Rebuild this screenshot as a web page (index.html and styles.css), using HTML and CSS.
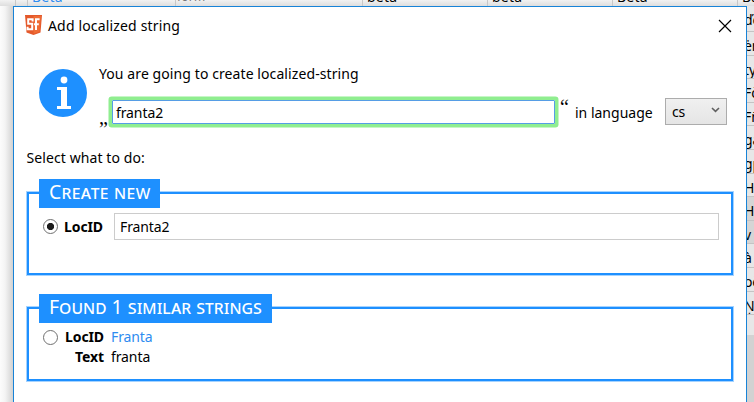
FILE: index.html
```html
<!DOCTYPE html>
<html lang="en">
<head>
<meta charset="utf-8">
<title>Add localized string</title>
<link rel="stylesheet" href="styles.css">
</head>
<body>
<div class="backdrop">
  <div class="head-row"><span></span><span class="link">Beta</span><span class="grey">form</span><span>beta</span><span>beta</span><span>Beta</span><span>Ba</span></div>
  <div class="side-rows">
    <div>ďe</div><div>ėn</div><div>ty</div><div>Fò</div><div>Fñ</div><div>gà</div><div>gµ</div><div>H</div><div class="dark">HÒ</div><div class="dark">v</div><div>à</div><div>oè</div><div>Ņa</div><div></div>
  </div>
</div>
<main class="dialog">
  <header class="titlebar">
    <svg class="logo" width="17" height="20" viewBox="0 0 17 20"><path d="M0 0H17L15.5 17.5L8.5 20L1.5 17.5Z" fill="#e4592b"/><path d="M8.5 1H16L14.5 16.7L8.5 18.8Z" fill="#ef6c35"/><path d="M7.6 6.5V4.2H3.2V8.8H7.2V14.2H2.6V11.8M14.6 4.2H11V15M9 9.2H13.8" fill="none" stroke="#fff" stroke-width="2"/></svg>
    <h1>Add localized string</h1>
    <svg class="close" width="14" height="14" viewBox="0 0 14 14"><path d="M1 1L13 13M13 1L1 13" stroke="#000" stroke-width="1.15" fill="none"/></svg>
  </header>
  <section class="intro">
    <svg class="info" width="48" height="48" viewBox="0 0 48 48"><circle cx="24" cy="24" r="24" fill="#1e90ff"/><circle cx="25" cy="11" r="3.4" fill="#fff"/><path d="M18 18H28V37H32V40H18V37H22V21H18Z" fill="#fff"/></svg>
    <div class="intro-body">
      <p>You are going to create localized-string</p>
      <div class="string-row">
        <span class="quote low">„</span>
        <div class="string-input">franta2</div>
        <span class="quote high">“</span>
        <span class="in-lang">in language</span>
        <div class="select"><span>cs</span><svg width="9" height="6" viewBox="0 0 9 6"><path d="M1 1L4.5 4.3L8 1" fill="none" stroke="#606060" stroke-width="1.6"/></svg></div>
      </div>
    </div>
  </section>
  <p class="prompt">Select what to do:</p>
  <section class="group create">
    <h2>Create new</h2>
    <div class="choice"><i class="radio on"></i><b>LocID</b><div class="id-input">Franta2</div></div>
  </section>
  <section class="group found">
    <h2>Found 1 similar strings</h2>
    <div class="match"><i class="radio"></i><b>LocID</b><span class="link">Franta</span><b class="text-label">Text</b><span>franta</span></div>
  </section>
</main>
</body>
</html>
```
FILE: styles.css
```css
* { box-sizing: border-box; }
body { margin: 0; width: 754px; height: 402px; overflow: hidden; position: relative; background: #fafafa; font: 14px/20px "Noto Sans", "Open Sans", sans-serif; color: #000; letter-spacing: -.1px; }
h1, h2, p { margin: 0; font-weight: 400; }
.link { color: #2e8cf0; }
.backdrop { height: 402px; background: linear-gradient(90deg, #fcfcfc 0, #f4f4f4 5px, #d2d2d2 13px, #d2d2d2 100%); }
.head-row { height: 6px; overflow: hidden; display: grid; grid-template-columns: 12px 148px 187px 125px 125px 125px 17px; padding-left: 15px; background: linear-gradient(#f2f2f2, #dedede); }
.head-row span { border-left: 1px solid #c8c8c8; padding-left: 4px; line-height: 20px; margin-top: -13px; height: 19px; letter-spacing: .2px; }
.head-row .grey { color: #777; padding-left: 1px; font-size: 12px; }
.side-rows { margin-left: 747px; width: 7px; overflow: hidden; display: grid; grid-template-rows: 26px repeat(12, 23.6px) 20px; }
.side-rows div { border-bottom: 1px solid #c4c4c4; background: #e7e7e7; line-height: 27px; overflow: hidden; white-space: nowrap; text-indent: -3px; }
.side-rows .dark { background: #d5d5d5; }
.side-rows div:last-child { border: 0; }
.dialog { position: absolute; left: 13px; top: 6px; width: 734px; height: 410px; background: #fff; border: 1px solid #1883d7; padding: 0 12px; }
.titlebar { height: 48px; display: flex; align-items: flex-start; padding-top: 8px; margin-left: -1px; }
.logo { flex: none; }
h1 { font-size: 14px; line-height: 20px; margin: 1px 0 0 6px; flex: 1; letter-spacing: .16px; }
.close { margin: 4px 2px 0 0; }
.intro { display: flex; padding-left: 13px; height: 92px; }
.info { flex: none; margin-top: 14px; }
.intro-body { margin-left: 12px; padding-top: 9px; flex: none; }
.intro-body p { letter-spacing: .09px; }
.string-row { display: flex; height: 36px; margin-top: 11px; }
.quote { font: 20px/20px "Liberation Serif", serif; letter-spacing: 0; width: 9px; flex: none; }
.low { margin: 12px 4px 0 0; }
.high { margin: 2px 0 0 5px; }
.string-input { width: 443px; height: 24px; border: 1px solid #569de5; box-shadow: 0 0 0 3px #90ee90, 0 0 0 3.5px #90ee90; border-radius: 1px; padding: 2px 3px; margin-top: 5px; line-height: 20px; flex: none; }
.in-lang { margin: 8px 0 0 6px; width: 90px; white-space: nowrap; flex: none; letter-spacing: 0; }
.select { width: 62px; height: 27px; margin-top: 3px; border: 1px solid #acacac; background: linear-gradient(#f0f0f0, #e5e5e5); display: flex; align-items: center; justify-content: space-between; padding: 1px 6px 0; flex: none; }
.select svg { margin-bottom: 4px; }
.prompt { height: 45px; line-height: 22px; letter-spacing: .09px; padding-left: .5px; }
.group { margin-left: 1px; width: 706px; border: 2px solid #1e90ff; box-shadow: 0 0 0 1px #a5d3ff; }
.create { height: 83px; }
.found { height: 74px; margin-top: 32px; }
h2 { position: relative; height: 29px; margin: -15px 0 0 10px; padding: 0 10px; background: #1e90ff; color: #fff; font-size: 19.4px; line-height: 26px; font-variant: small-caps; letter-spacing: .05px; white-space: nowrap; }
.create h2 { width: 121px; letter-spacing: .3px; }
.found h2 { width: 233px; }
.choice { display: flex; align-items: center; margin: 5px 0 0 14px; }
.radio { width: 15px; height: 15px; border: 1px solid #707070; border-radius: 50%; background: #fff; display: block; flex: none; }
.on { background: radial-gradient(circle, #1c1c1c 3.2px, #fff 4px); }
b { letter-spacing: -.1px; }
.choice b { width: 56px; padding-left: 6px; flex: none; }
.id-input { width: 605px; height: 27px; border: 1px solid #ccc; padding: 3px 5px; flex: none; }
.match { display: grid; grid-template-columns: 15px 46px 100px; grid-auto-rows: 20px; align-items: center; margin: 4px 0 0 14px; }
.match b { text-align: right; grid-column: 2; }
.match span { padding-left: 7px; }
```
